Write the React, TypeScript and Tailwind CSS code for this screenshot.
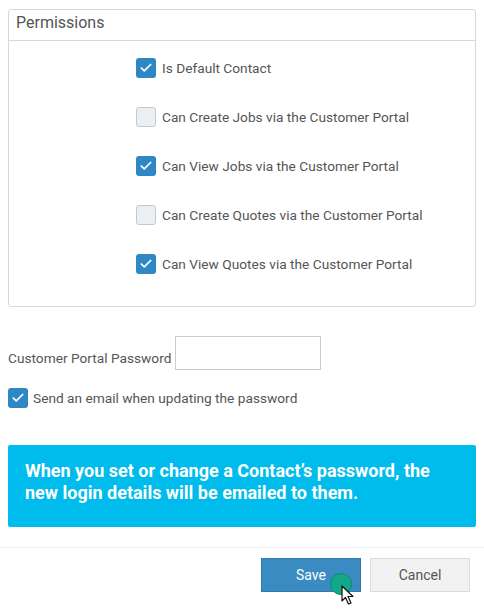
import { Check } from "lucide-react";

const permissions = [
  { label: "Is Default Contact", checked: true },
  { label: "Can Create Jobs via the Customer Portal", checked: false },
  { label: "Can View Jobs via the Customer Portal", checked: true },
  { label: "Can Create Quotes via the Customer Portal", checked: false },
  { label: "Can View Quotes via the Customer Portal", checked: true },
];

function Box({ checked }: { checked: boolean }) {
  return checked ? (
    <span className="flex h-5 w-5 shrink-0 items-center justify-center rounded-[3px] bg-[#2f88c6]">
      <Check size={14} strokeWidth={3} className="text-white" />
    </span>
  ) : (
    <span className="h-5 w-5 shrink-0 rounded-[3px] border border-[#c3c9cf] bg-[#eceff2]" />
  );
}

export default function App() {
  return (
    <div className="w-[484px] h-[611px] overflow-hidden bg-white font-['Roboto',sans-serif] text-[#555]">
      <div className="px-2 pt-[9px]">
        <div className="rounded-[3px] border border-[#d5d9de]">
          <div className="h-[31px] border-b border-[#d5d9de] pl-[7px] pt-[1px] text-[16px] leading-6 text-[#555]">
            Permissions
          </div>
          <div className="flex flex-col gap-[29px] pl-[127px] pt-[17px] pb-[32px]">
            {permissions.map((p) => (
              <div key={p.label} className="flex h-5 items-center gap-[6px] text-[13.7px] leading-5">
                <Box checked={p.checked} />
                <span>{p.label}</span>
              </div>
            ))}
          </div>
        </div>

        <div className="mt-[29px] flex items-center text-[13.7px]">
          <span className="mt-[10px]">Customer Portal Password</span>
          <input className="ml-[4px] h-[34px] w-[146px] border border-[#cccccc] outline-none" />
        </div>

        <div className="mt-[18px] flex items-center gap-[5px] text-[13.7px] leading-5">
          <Box checked />
          <span>Send an email when updating the password</span>
        </div>

        <div className="mt-[37px] h-[82px] rounded-[2px] bg-[#00bcec] px-[17px] pt-[15px] text-[18px] font-bold leading-[22px] text-white">
          When you set or change a Contact’s password, the new login details will be emailed to them.
        </div>
      </div>

      <div className="mt-[20px] border-t border-[#eceeef]" />

      <div className="flex justify-end gap-[9px] pr-[14px] pt-[10px]">
        <div className="relative">
          <button className="h-[34px] w-[100px] border border-[#2f79ad] bg-[#3a8bc2] text-[14px] text-white">
            Save
          </button>
          <span className="absolute left-[69px] top-[15px] h-[22px] w-[22px] rounded-full border border-[#0c8a70] bg-[#13a88a]" />
          <svg className="absolute left-[80px] top-[27px]" width="14" height="21" viewBox="0 0 14 21">
            <path d="M1 1 L1 16 L4.5 12.5 L7.5 19 L10 18 L7 11.5 L12 11.5 Z" fill="#fff" stroke="#111" strokeWidth="1.2" strokeLinejoin="round" />
          </svg>
        </div>
        <button className="h-[34px] w-[100px] border border-[#dcdcdc] bg-[#f2f2f2] text-[14px] text-[#555]">
          Cancel
        </button>
      </div>
    </div>
  );
}
